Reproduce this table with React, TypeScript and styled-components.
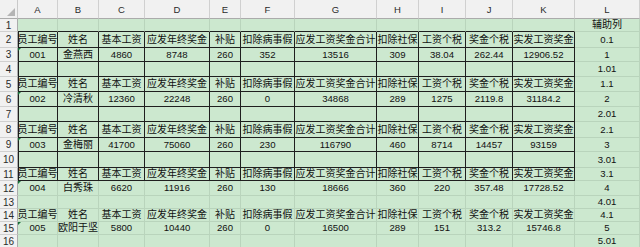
import * as React from 'react';
import styled, { createGlobalStyle } from 'styled-components';

const GlobalStyle = createGlobalStyle`
  html, body {
    margin: 0;
    padding: 0;
    background: #cce8cf;
  }
`;

const COLS = ['A', 'B', 'C', 'D', 'E', 'F', 'G', 'H', 'I', 'J', 'K', 'L'];
const COL_WIDTHS = [18, 40, 41, 46, 65, 31, 54, 82, 42, 47, 47, 62, 65];
const ROW_HEIGHTS = [19, 13, 16, 14, 15, 15, 15, 15, 16, 14, 16, 13, 15, 13, 13, 13, 13];

const HEAD = ['员工编号', '姓名', '基本工资', '应发年终奖金', '补贴', '扣除病事假', '应发工资奖金合计', '扣除社保', '工资个税', '奖金个税', '实发工资奖金'];

const PEOPLE = [
  ['001', '金燕西', '4860', '8748', '260', '352', '13516', '309', '38.04', '262.44', '12906.52'],
  ['002', '冷清秋', '12360', '22248', '260', '0', '34868', '289', '1275', '2119.8', '31184.2'],
  ['003', '金梅丽', '41700', '75060', '260', '230', '116790', '460', '8714', '14457', '93159'],
  ['004', '白秀珠', '6620', '11916', '260', '130', '18666', '360', '220', '357.48', '17728.52'],
  ['005', '欧阳于坚', '5800', '10440', '260', '0', '16500', '289', '151', '313.2', '15746.8'],
];

const HELPER = ['辅助列', '0.1', '1', '1.01', '1.1', '2', '2.01', '2.1', '3', '3.01', '3.1', '4', '4.01', '4.1', '5', '5.01'];

// rows 1..16 -> cells A..K
const buildRows = () => {
  const rows: string[][] = [new Array(11).fill('')];
  PEOPLE.forEach((p, i) => {
    rows.push(HEAD);
    rows.push(p);
    if (i < PEOPLE.length - 1) rows.push(new Array(11).fill(''));
  });
  rows.push(new Array(11).fill(''));
  return rows;
};

const Sheet = styled.div`
  display: grid;
  grid-template-columns: ${COL_WIDTHS.map(w => `${w}px`).join(' ')};
  grid-template-rows: ${ROW_HEIGHTS.map(h => `${h}px`).join(' ')};
  width: 640px;
  height: 247px;
  overflow: hidden;
  background: #cce8cf;
  font-family: "Liberation Sans", "Noto Sans CJK SC", sans-serif;
  color: #111;
`;

const Corner = styled.div`
  box-sizing: border-box;
  background: #f1f1f1;
  border-right: 1px solid #c9c9c9;
  border-bottom: 1px solid #ababab;
  display: flex;
  align-items: flex-end;
  justify-content: flex-end;
  padding: 0 2px 2px 0;
`;

const ColHead = styled.div`
  box-sizing: border-box;
  background: #f1f1f1;
  border-right: 1px solid #d0d0d0;
  border-bottom: 1px solid #ababab;
  display: flex;
  align-items: center;
  justify-content: center;
  font-size: 9.5px;
  color: #2a2a2a;
`;

const RowHead = styled.div`
  box-sizing: border-box;
  background: #f1f1f1;
  border-right: 1px solid #ababab;
  border-bottom: 1px solid #d0d0d0;
  display: flex;
  align-items: center;
  justify-content: center;
  font-size: 10px;
  color: #2a2a2a;
`;

type CellProps = {
  $right?: boolean;
  $bottom?: boolean;
  $left?: boolean;
  $mark?: boolean;
  $cjk?: boolean;
};

const Cell = styled.div<CellProps>`
  position: relative;
  box-sizing: border-box;
  display: flex;
  align-items: center;
  justify-content: center;
  overflow: hidden;
  white-space: nowrap;
  line-height: 1;
  font-size: ${props => (props.$cjk ? '10px' : '9.6px')};
  border-right: 1px solid ${props => (props.$right ? '#1f1f1f' : '#b9d4bc')};
  border-bottom: 1px solid ${props => (props.$bottom ? '#1f1f1f' : '#b9d4bc')};
  box-shadow: ${props => (props.$left ? 'inset 1px 0 0 #1f1f1f' : 'none')};

  &::before {
    content: '';
    display: ${props => (props.$mark ? 'block' : 'none')};
    position: absolute;
    left: 0;
    top: 0;
    border-top: 3px solid #17703a;
    border-right: 3px solid transparent;
  }
`;

const isCjk = (s: string) => /[\u4e00-\u9fff]/.test(s);

export default function App() {
  const rows = buildRows();
  return (
    <>
      <GlobalStyle />
      <Sheet>
        <Corner>
          <svg width="8" height="8" viewBox="0 0 8 8">
            <polygon points="8,0 8,8 0,8" fill="#b5b5b5" />
          </svg>
        </Corner>
        {COLS.map(c => (
          <ColHead key={c}>{c}</ColHead>
        ))}
        {rows.map((row, ri) => {
          const r = ri + 1;
          const inBox = r >= 2 && r <= 11;
          const isData = row[0] !== '' && row[0] !== HEAD[0];
          return (
            <React.Fragment key={r}>
              <RowHead>{r}</RowHead>
              {row.map((v, ci) => (
                <Cell
                  key={ci}
                  $right={inBox}
                  $bottom={inBox || r === 1}
                  $left={inBox && ci === 0}
                  $mark={isData && ci === 0}
                  $cjk={isCjk(v)}
                >
                  {v}
                </Cell>
              ))}
              <Cell $cjk={isCjk(HELPER[ri])}>{HELPER[ri]}</Cell>
            </React.Fragment>
          );
        })}
      </Sheet>
    </>
  );
}
